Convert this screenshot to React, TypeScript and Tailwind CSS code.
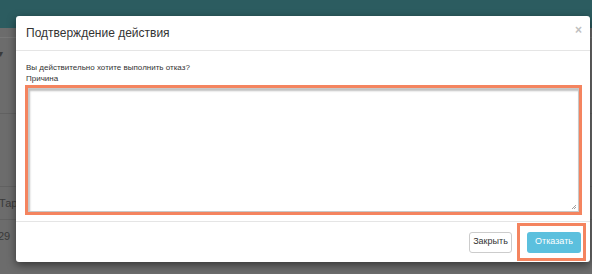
export default function App() {
  const font = { fontFamily: '"Liberation Sans", Arial, sans-serif' };
  return (
    <div className="relative w-[592px] h-[274px] overflow-hidden bg-[#6c6c6c]" style={font}>
      {/* background page (dimmed) */}
      <div className="flex flex-col h-full">
        <div className="h-[28px] bg-[#2c5c60] shrink-0" />
        <div className="h-[10px] border-b border-[#777]" />
        <div className="h-[30px] flex items-center text-[#3a3a3a] text-[10px]">
          <span className="ml-[-2px]">▾</span>
        </div>
        <div className="h-[46px] border-b border-[#616161]" />
        <div className="h-[73px] border-b border-[#616161]" />
        <div className="h-[33px] flex items-center text-[#3a3a3a] text-[11px] border-b border-[#616161]">
          <span className="ml-[-1px]">Тара</span>
        </div>
        <div className="h-[32px] flex items-center text-[#3a3a3a] text-[11px]">
          <span className="ml-[-2px]">29</span>
        </div>
      </div>

      {/* modal */}
      <div className="absolute left-[16px] top-[16px] w-[574px] h-[246px] bg-white rounded-[3px] shadow-[0_3px_8px_rgba(0,0,0,0.5)] flex flex-col">
        <div className="h-[35px] shrink-0 flex items-center justify-between pl-[10px] pr-[8px] border-b border-[#e5e5e5]">
          <span className="text-[12px] text-[#333]">Подтверждение действия</span>
          <span className="text-[12px] text-[#c0c0c0] font-bold leading-none mt-[-6px]">×</span>
        </div>
        <div className="flex-1 flex flex-col px-[10px] pt-[11px] border-b border-[#e5e5e5]">
          <div className="text-[8px] leading-[11px] text-[#333]">Вы действительно хотите выполнить отказ?</div>
          <div className="text-[8px] leading-[11px] text-[#333]">Причина</div>
          <div className="mt-[1px] ml-[-1px] h-[130px] w-[557px] border-[3px] border-[#f4845f] bg-[#f4845f]">
            <div className="relative w-full h-full bg-white border border-[#c8c8c8] shadow-[inset_1px_2px_2px_rgba(0,0,0,0.25)]">
              <svg className="absolute right-[1px] bottom-[1px]" width="6" height="6" viewBox="0 0 6 6">
                <path d="M5 1 L1 5 M5 3 L3 5" stroke="#888" strokeWidth="0.8" />
              </svg>
            </div>
          </div>
        </div>
        <div className="h-[40px] shrink-0 flex items-center justify-end pr-[4px]">
          <div className="h-[21px] w-[43px] justify-center flex items-center border border-[#ccc] rounded-[3px] text-[9px] text-[#333] mr-[5px]">
            Закрыть
          </div>
          <div className="h-[38px] border-[3px] border-[#f4845f] flex items-center pl-[7px] pr-[2px]">
            <div className="h-[21px] w-[54px] justify-center flex items-center rounded-[3px] bg-[#5bc0de] text-white text-[9px]">
              Отказать
            </div>
          </div>
        </div>
      </div>
    </div>
  );
}
